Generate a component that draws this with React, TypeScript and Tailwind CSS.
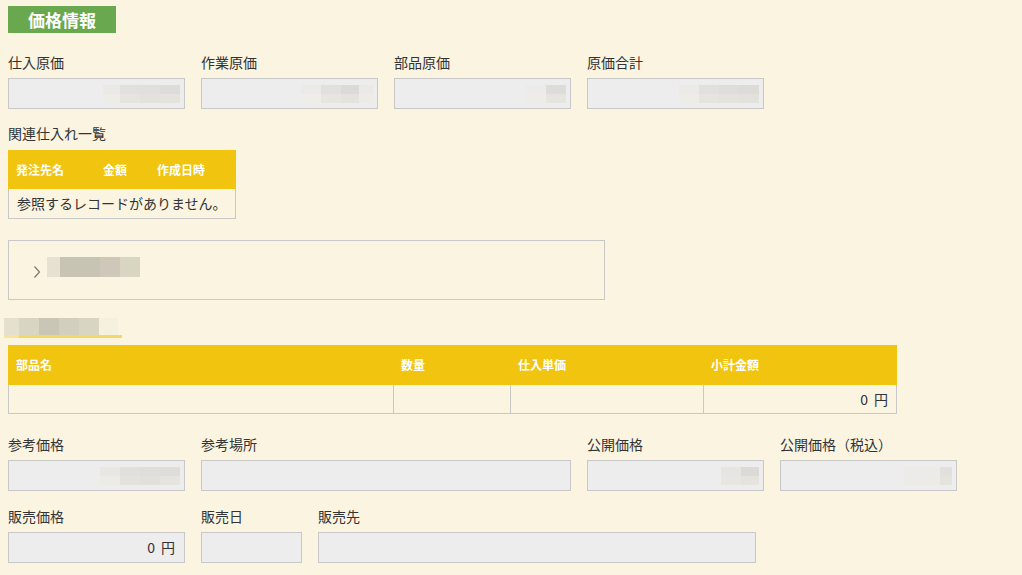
import React from "react"

type Row = string[]

// pixelated (masked) text block
function Mosaic({ rows, rowH = "h-[9px]" }: { rows: Row[]; rowH?: string }) {
  return (
    <div className="flex flex-col">
      {rows.map((r, i) => (
        <div key={i} className={`flex ${rowH}`}>
          {r.map((c, j) => (
            <div key={j} className={c} />
          ))}
        </div>
      ))}
    </div>
  )
}

function Field({
  label,
  w = "w-[177px]",
  children,
}: {
  label: string
  w?: string
  children?: React.ReactNode
}) {
  return (
    <div className={w}>
      <div className="h-5 leading-5">{label}</div>
      <div className="mt-[6px] flex h-[31px] items-center justify-end border border-[#c8c8c8] bg-[#ededed] pr-[4px]">
        {children}
      </div>
    </div>
  )
}

function Yen() {
  return (
    <span className="flex items-center">
      0<span className="ml-[6px]">円</span>
    </span>
  )
}

const m1: Row[] = [
  ["w-[17px] bg-[#ebe9e5]", "w-[20px] bg-[#e2e0dc]", "w-[20px] bg-[#e1dfdb]", "w-[20px] bg-[#dedcd8]"],
  ["w-[17px] bg-[#eeece6]", "w-[20px] bg-[#e6e4de]", "w-[20px] bg-[#e3e1dc]", "w-[20px] bg-[#e5e3dd]"],
]
const m2: Row[] = [
  ["w-[20px] bg-[#eceae7]", "w-[20px] bg-[#e2e0dc]", "w-[18px] bg-[#dcdad6]", "w-[14px] bg-[#ebe9e5]"],
  ["w-[20px] bg-[#efede8]", "w-[20px] bg-[#e7e5e0]", "w-[18px] bg-[#e4e2dd]", "w-[14px] bg-[#ecebe7]"],
]
const m3: Row[] = [
  ["w-[20px] bg-[#ecebe9]", "w-[20px] bg-[#dedcd8]"],
  ["w-[20px] bg-[#eeece8]", "w-[20px] bg-[#e6e4de]"],
]
const m4: Row[] = [
  ["w-[20px] bg-[#eceae7]", "w-[20px] bg-[#e2e0dc]", "w-[20px] bg-[#dfddd9]", "w-[20px] bg-[#dddbd7]"],
  ["w-[20px] bg-[#eeece7]", "w-[20px] bg-[#e6e4de]", "w-[20px] bg-[#e4e2dc]", "w-[20px] bg-[#e3e1dc]"],
]
const m5: Row[] = [
  ["w-[20px] bg-[#e9e7e3]", "w-[20px] bg-[#e2e0dc]", "w-[20px] bg-[#e0deda]", "w-[20px] bg-[#dfddd9]"],
  ["w-[20px] bg-[#ecebe6]", "w-[20px] bg-[#e4e2dd]", "w-[20px] bg-[#e2e0db]", "w-[20px] bg-[#e6e4de]"],
]
const m6: Row[] = [
  ["w-[20px] bg-[#e7e5e1]", "w-[18px] bg-[#dcdad6]"],
  ["w-[20px] bg-[#e8e6e1]", "w-[18px] bg-[#e5e3de]"],
]
const m7: Row[] = [
  ["w-[36px] bg-[#ecebe8]", "w-[12px] bg-[#e2e0dc]"],
  ["w-[36px] bg-[#edebe8]", "w-[12px] bg-[#e5e3de]"],
]

export default function App() {
  return (
    <div className="min-h-screen bg-[#faf4e1] px-2 pt-[6px] font-['Noto_Sans_CJK_JP','Liberation_Sans',sans-serif] text-[14px] text-[#333]">
      {/* heading */}
      <div className="flex h-[27px] w-[108px] items-center justify-center bg-[#6aa84f] text-[17px] font-bold text-white">
        価格情報
      </div>

      {/* cost */}
      <div className="mt-[19px] flex gap-4">
        <Field label="仕入原価">
          <Mosaic rows={m1} />
        </Field>
        <Field label="作業原価">
          <Mosaic rows={m2} />
        </Field>
        <Field label="部品原価">
          <Mosaic rows={m3} />
        </Field>
        <Field label="原価合計">
          <Mosaic rows={m4} />
        </Field>
      </div>

      {/* related purchases */}
      <div className="mt-[14px] h-5 leading-5">関連仕入れ一覧</div>
      <div className="mt-[7px] w-[228px]">
        <div className="flex h-[39px] items-center bg-[#f1c40f] text-[12px] font-bold text-white">
          <div className="w-[87px] pl-2">発注先名</div>
          <div className="w-[54px] pl-2">金額</div>
          <div className="w-[87px] pl-2">作成日時</div>
        </div>
        <div className="flex h-[30px] items-center border-x border-b border-[#c8c8c8] pl-2">
          参照するレコードがありません。
        </div>
      </div>

      {/* collapsible */}
      <div className="mt-[21px] flex h-[60px] w-[597px] items-center border border-[#c8c8c8] pl-6">
        <svg width="8" height="14" viewBox="0 0 8 14" className="mt-[4px]">
          <polyline points="1.5,1.5 6.5,7 1.5,12.5" fill="none" stroke="#777" strokeWidth="1.2" />
        </svg>
        <div className="mb-[6px] ml-[6px]">
          <Mosaic
            rowH="h-[20px]"
            rows={[["w-[13px] bg-[#e6e1d0]", "w-[40px] bg-[#c8c4b4]", "w-[20px] bg-[#cfc7b9]", "w-[20px] bg-[#d8d5c3]"]]}
          />
        </div>
      </div>

      {/* parts title */}
      <div className="-ml-1 mt-[18px] w-[118px]">
        <Mosaic
          rowH="h-[17px]"
          rows={[["w-[15px] bg-[#e5e0cd]", "w-[20px] bg-[#d8d5c3]", "w-[20px] bg-[#c9c6b5]", "w-[20px] bg-[#d2cfbe]", "w-[20px] bg-[#d8d5c3]", "w-[19px] bg-[#f6f1de]"]]}
        />
        <div className="flex h-[3px]">
          <div className="w-[15px] bg-[#f7e39a]" />
          <div className="w-[103px] bg-[#f3d868]" />
        </div>
      </div>

      {/* parts table */}
      <div className="mt-[7px] w-[889px]">
        <div className="flex h-10 items-center bg-[#f1c40f] text-[12px] font-bold text-white">
          <div className="w-[385px] pl-2">部品名</div>
          <div className="w-[117px] pl-2">数量</div>
          <div className="w-[193px] pl-2">仕入単価</div>
          <div className="w-[194px] pl-2">小計金額</div>
        </div>
        <div className="flex h-[29px] border-b border-[#c8c8c8]">
          <div className="w-[385px] border-l border-[#c8c8c8]" />
          <div className="w-[117px] border-l border-[#c8c8c8]" />
          <div className="w-[193px] border-l border-[#c8c8c8]" />
          <div className="flex w-[194px] items-center justify-end border-x border-[#c8c8c8] pr-[8px]">
            <Yen />
          </div>
        </div>
      </div>

      {/* reference / public price */}
      <div className="mt-5 flex gap-4">
        <Field label="参考価格">
          <Mosaic rows={m5} />
        </Field>
        <Field label="参考場所" w="w-[370px]" />
        <Field label="公開価格">
          <Mosaic rows={m6} />
        </Field>
        <Field label="公開価格（税込）">
          <Mosaic rows={m7} />
        </Field>
      </div>

      {/* sales */}
      <div className="mt-[15px] flex gap-4">
        <Field label="販売価格">
          <span className="pr-[5px]">
            <Yen />
          </span>
        </Field>
        <Field label="販売日" w="w-[101px]" />
        <Field label="販売先" w="w-[438px]" />
      </div>
    </div>
  )
}
